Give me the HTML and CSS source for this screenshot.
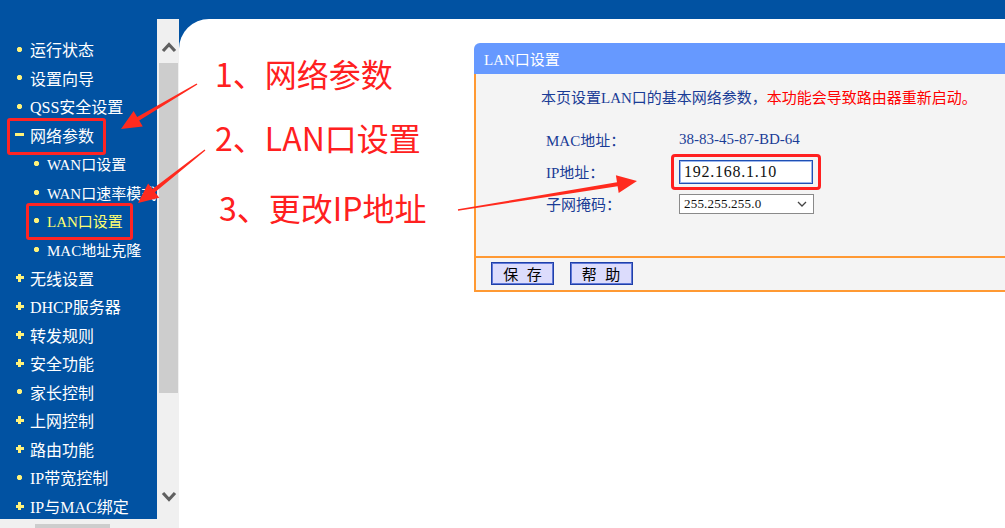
FILE: index.html
```html
<!DOCTYPE html>
<html lang="zh-CN">
<head>
  <meta charset="UTF-8">
  <meta name="viewport" content="width=device-width, initial-scale=1.0">
  <link rel="stylesheet" href="styles.css">
  <title>LAN口设置</title>
</head>
<body>
  <div class="topbar"></div>
  <div class="frame">
    <aside class="sidebar">
      <ul class="menu">
        <li class="item"><span class="bullet dot"></span>运行状态</li>
        <li class="item"><span class="bullet dot"></span>设置向导</li>
        <li class="item"><span class="bullet dot"></span>QSS安全设置</li>
        <li class="item marked"><span class="bullet minus"></span>网络参数</li>
        <li class="item sub"><span class="bullet dot"></span>WAN口设置</li>
        <li class="item sub"><span class="bullet dot"></span>WAN口速率模式</li>
        <li class="item sub active marked"><span class="bullet dot"></span>LAN口设置</li>
        <li class="item sub"><span class="bullet dot"></span>MAC地址克隆</li>
        <li class="item"><span class="bullet plus"></span>无线设置</li>
        <li class="item"><span class="bullet plus"></span>DHCP服务器</li>
        <li class="item"><span class="bullet plus"></span>转发规则</li>
        <li class="item"><span class="bullet plus"></span>安全功能</li>
        <li class="item"><span class="bullet dot"></span>家长控制</li>
        <li class="item"><span class="bullet plus"></span>上网控制</li>
        <li class="item"><span class="bullet plus"></span>路由功能</li>
        <li class="item"><span class="bullet dot"></span>IP带宽控制</li>
        <li class="item"><span class="bullet plus"></span>IP与MAC绑定</li>
      </ul>
      <div class="hscroll"><div class="hthumb"></div></div>
    </aside>

    <div class="vscroll">
      <svg class="chev" viewBox="0 0 16 12"><polyline points="2,10 8,3.5 14,10"/></svg>
      <div class="vthumb"></div>
      <svg class="chev" viewBox="0 0 16 12"><polyline points="2,2 8,8.5 14,2"/></svg>
    </div>

    <main class="content">
      <div class="notes">
        <p class="note">1、网络参数</p>
        <p class="note">2、LAN口设置</p>
        <p class="note third">3、更改IP地址</p>
      </div>

      <section class="panel">
        <div class="panel-title">LAN口设置</div>
        <div class="panel-body">
          <p class="intro">本页设置LAN口的基本网络参数，<span class="warn">本功能会导致路由器重新启动。</span></p>
          <div class="row">
            <span class="label">MAC地址：</span>
            <span class="value">38-83-45-87-BD-64</span>
          </div>
          <div class="row">
            <span class="label">IP地址：</span>
            <span class="ip-mark"><input class="ip" type="text" value="192.168.1.10"></span>
          </div>
          <div class="row">
            <span class="label">子网掩码：</span>
            <div class="select">
              <span>255.255.255.0</span>
              <svg class="select-arrow" viewBox="0 0 10 6"><polyline points="1,1 5,5 9,1"/></svg>
            </div>
          </div>
        </div>
        <div class="panel-foot">
          <button class="btn">保 存</button>
          <button class="btn">帮 助</button>
        </div>
      </section>
    </main>
  </div>

  <!-- red annotation arrows drawn over the screenshot -->
  <svg class="arrows" viewBox="0 0 1005 528">
    <polygon points="196.6,83.4 137.2,117.1 133.6,111.1 121,129 142.8,126.5 139.2,120.5 197.4,84.6"/>
    <polygon points="204.6,149.5 152.5,189.0 148.1,183.5 138,203 159.3,197.7 154.9,192.2 205.4,150.5"/>
    <polygon points="457.9,209.3 617.0,182.2 615.9,175.3 637,181 618.7,193.1 617.6,186.2 458.1,210.7"/>
  </svg>
</body>
</html>
```

FILE: styles.css
```css
* {
  box-sizing: border-box;
}

body {
  margin: 0;
  width: 1005px;
  height: 528px;
  overflow: hidden;
  position: relative;
  background-color: #0152a2;
  font-family: "Liberation Serif", "Noto Sans CJK SC", serif;
}

.topbar {
  height: 19px;
}

.frame {
  display: flex;
  height: 509px;
}

/* left menu */
.sidebar {
  width: 157px;
  display: flex;
  flex-direction: column;
}

.menu {
  flex: 1;
  list-style: none;
  margin: 0;
  padding: 16px 0 0;
  overflow: hidden;
}

.item {
  position: relative;
  height: 28.55px;
  display: flex;
  align-items: center;
  padding-left: 15px;
  color: #fff;
  font-size: 16px;
  white-space: nowrap;
}

.item.sub {
  padding-left: 32px;
  font-size: 15px;
}

.item.active {
  color: #ffff70;
}

.item.marked::after {
  content: "";
  position: absolute;
  left: 7px;
  top: -3px;
  width: 93px;
  height: 31px;
  border: 3px solid #ff2424;
  border-radius: 3px;
}

.item.sub.marked::after {
  left: 26px;
  width: 101px;
}

.bullet {
  flex: none;
  width: 9px;
  height: 9px;
  margin-right: 6px;
}

.dot {
  background: radial-gradient(circle, #fff27a 2.2px, transparent 3px);
}

.plus {
  background:
    linear-gradient(#fff27a, #fff27a) center / 8px 3px no-repeat,
    linear-gradient(#fff27a, #fff27a) center / 3px 8px no-repeat;
}

.minus {
  background: linear-gradient(#fff27a, #fff27a) center / 9px 3px no-repeat;
}

.hscroll {
  height: 9px;
  padding: 5px 0 0 35px;
  background-color: #f0f0f0;
}

.hthumb {
  width: 75px;
  height: 4px;
  background-color: #cdcdcd;
}

/* vertical scrollbar */
.vscroll {
  width: 22px;
  display: flex;
  flex-direction: column;
  align-items: center;
  padding-top: 22px;
  background-color: #f0f0f0;
}

.chev {
  flex: none;
  width: 16px;
  height: 12px;
  margin-left: 1px;
}

.chev polyline {
  fill: none;
  stroke: #606060;
  stroke-width: 3.2;
}

.vthumb {
  flex: none;
  width: 19px;
  height: 330px;
  margin: 10px 0 98px 1px;
  background-color: #cdcdcd;
}

/* content */
.content {
  flex: 1;
  display: flex;
  background-color: #fff;
  border-top-left-radius: 30px;
}

.notes {
  width: 295px;
  padding: 34px 0 0 36px;
  font-family: "Noto Sans CJK SC", sans-serif;
  font-size: 32px;
  color: #ff2020;
}

.note {
  margin: 0;
  line-height: 40px;
  white-space: nowrap;
}

.note + .note {
  margin-top: 24px;
}

.note.third {
  margin-top: 30px;
  padding-left: 4px;
}

.panel {
  flex: 1;
  align-self: flex-start;
  margin-top: 24px;
  font-size: 15px;
}

.panel-title {
  height: 31px;
  display: flex;
  align-items: center;
  padding-left: 10px;
  background-color: #6699ff;
  color: #fff;
  border-top-left-radius: 6px;
}

.panel-body {
  background-color: #f4f4f4;
  border-left: 2px solid #ff9933;
  padding: 14px 0 36px;
}

.intro {
  margin: 0 0 15.5px 65px;
  line-height: 20px;
  color: #1a3c96;
  white-space: nowrap;
}

.warn {
  color: #ff0000;
}

.row {
  height: 32px;
  display: flex;
  align-items: center;
  padding-left: 70px;
}

.label {
  width: 133px;
  color: #1a3c96;
}

.value {
  color: #1a3c96;
}

.ip-mark {
  position: relative;
  display: flex;
}

.ip-mark::after {
  content: "";
  position: absolute;
  top: -6px;
  bottom: -6px;
  left: -8.5px;
  right: -8px;
  border: 3px solid #ff2020;
  border-radius: 4px;
}

.ip {
  width: 134px;
  height: 24px;
  padding: 0 0 0 4px;
  border: 1px solid #1f4fb4;
  box-shadow: inset 0 0 0 1px #9bb6ec;
  background-color: #fff;
  font-family: "Liberation Serif", serif;
  font-size: 16px;
  letter-spacing: 0.75px;
  color: #111;
  outline: none;
}

.select {
  width: 135px;
  height: 20px;
  display: flex;
  align-items: center;
  justify-content: space-between;
  padding: 0 6px 0 4px;
  border: 1px solid #8a8a8a;
  background-color: #fff;
  font-size: 13px;
  letter-spacing: 0.2px;
  color: #111;
}

.select-arrow {
  width: 10px;
  height: 6px;
}

.select-arrow polyline {
  fill: none;
  stroke: #444;
  stroke-width: 1.3;
}

.panel-foot {
  height: 36px;
  display: flex;
  align-items: center;
  gap: 15.5px;
  padding-left: 15px;
  background-color: #f4f4f4;
  border-left: 2px solid #ff9933;
  border-top: 2px solid #ff9933;
  border-bottom: 2px solid #ff9933;
}

.btn {
  width: 63px;
  height: 23px;
  padding: 0;
  border: 1px solid #1f3fa8;
  box-shadow: inset 0 0 0 1px #5f78d8;
  background-color: #dcdcfc;
  font-family: "Noto Sans CJK SC", sans-serif;
  font-size: 15px;
  line-height: 1;
  word-spacing: 5px;
  color: #000;
}

.arrows {
  position: absolute;
  top: 0;
  left: 0;
  width: 1005px;
  height: 528px;
  pointer-events: none;
}

.arrows polygon {
  fill: #ff2a1e;
}
```
